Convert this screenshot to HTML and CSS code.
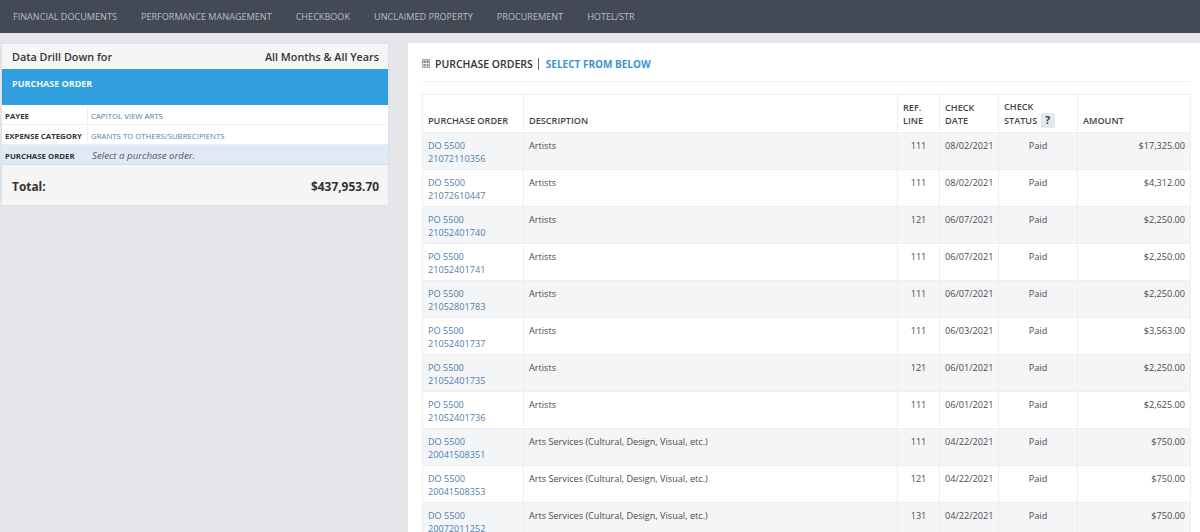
FILE: index.html
```html
<!DOCTYPE html>
<html lang="en">
<head>
<meta charset="utf-8">
<title>Purchase Orders</title>
<link rel="stylesheet" href="styles.css">
</head>
<body>
<nav class="topnav">
  <a>FINANCIAL DOCUMENTS</a>
  <a>PERFORMANCE MANAGEMENT</a>
  <a>CHECKBOOK</a>
  <a>UNCLAIMED PROPERTY</a>
  <a>PROCUREMENT</a>
  <a>HOTEL/STR</a>
</nav>
<main class="layout">
  <aside class="drill">
    <div class="drill-head"><span>Data Drill Down for</span><span>All Months &amp; All Years</span></div>
    <div class="drill-banner">PURCHASE ORDER</div>
    <div class="drill-row"><div class="drill-key">PAYEE</div><div class="drill-val link">CAPITOL VIEW ARTS</div></div>
    <div class="drill-row"><div class="drill-key">EXPENSE CATEGORY</div><div class="drill-val link">GRANTS TO OTHERS/SUBRECIPIENTS</div></div>
    <div class="drill-row current"><div class="drill-key">PURCHASE ORDER</div><div class="drill-val prompt">Select a purchase order.</div></div>
    <div class="drill-total"><span>Total:</span><span>$437,953.70</span></div>
  </aside>
  <section class="panel">
    <header class="panel-head">
      <svg class="panel-icon" width="8" height="9" viewBox="0 0 8 9" aria-hidden="true"><rect x="0.5" y="0.5" width="7" height="8" fill="#f4f4f4" stroke="#aaa"/><rect x="1.5" y="1.5" width="2" height="2.5" fill="#777"/><rect x="4.5" y="1.5" width="2" height="2.5" fill="#777"/><rect x="1.5" y="5" width="2" height="2.5" fill="#888"/><rect x="4.5" y="5" width="2" height="2.5" fill="#888"/></svg>
      <span class="panel-title">PURCHASE ORDERS</span>
      <span class="panel-sep"></span>
      <span class="panel-sub">SELECT FROM BELOW</span>
    </header>
    <table class="orders">
      <colgroup><col class="c1"><col class="c2"><col class="c3"><col class="c4"><col class="c5"><col class="c6"></colgroup>
      <thead>
        <tr><th>PURCHASE ORDER</th><th>DESCRIPTION</th><th>REF.<br>LINE</th><th>CHECK<br>DATE</th><th class="status-h">CHECK<br>STATUS <span class="help">?</span></th><th>AMOUNT</th></tr>
      </thead>
      <tbody>
        <tr><td class="link">DO 5500<br>21072110356</td><td>Artists</td><td class="ctr">111</td><td>08/02/2021</td><td class="ctr">Paid</td><td class="amt">$17,325.00</td></tr>
        <tr><td class="link">DO 5500<br>21072610447</td><td>Artists</td><td class="ctr">111</td><td>08/02/2021</td><td class="ctr">Paid</td><td class="amt">$4,312.00</td></tr>
        <tr><td class="link">PO 5500<br>21052401740</td><td>Artists</td><td class="ctr">121</td><td>06/07/2021</td><td class="ctr">Paid</td><td class="amt">$2,250.00</td></tr>
        <tr><td class="link">PO 5500<br>21052401741</td><td>Artists</td><td class="ctr">111</td><td>06/07/2021</td><td class="ctr">Paid</td><td class="amt">$2,250.00</td></tr>
        <tr><td class="link">PO 5500<br>21052801783</td><td>Artists</td><td class="ctr">111</td><td>06/07/2021</td><td class="ctr">Paid</td><td class="amt">$2,250.00</td></tr>
        <tr><td class="link">PO 5500<br>21052401737</td><td>Artists</td><td class="ctr">111</td><td>06/03/2021</td><td class="ctr">Paid</td><td class="amt">$3,563.00</td></tr>
        <tr><td class="link">PO 5500<br>21052401735</td><td>Artists</td><td class="ctr">121</td><td>06/01/2021</td><td class="ctr">Paid</td><td class="amt">$2,250.00</td></tr>
        <tr><td class="link">PO 5500<br>21052401736</td><td>Artists</td><td class="ctr">111</td><td>06/01/2021</td><td class="ctr">Paid</td><td class="amt">$2,625.00</td></tr>
        <tr><td class="link">DO 5500<br>20041508351</td><td>Arts Services (Cultural, Design, Visual, etc.)</td><td class="ctr">111</td><td>04/22/2021</td><td class="ctr">Paid</td><td class="amt">$750.00</td></tr>
        <tr><td class="link">DO 5500<br>20041508353</td><td>Arts Services (Cultural, Design, Visual, etc.)</td><td class="ctr">121</td><td>04/22/2021</td><td class="ctr">Paid</td><td class="amt">$750.00</td></tr>
        <tr><td class="link">DO 5500<br>20072011252</td><td>Arts Services (Cultural, Design, Visual, etc.)</td><td class="ctr">131</td><td>04/22/2021</td><td class="ctr">Paid</td><td class="amt">$750.00</td></tr>
      </tbody>
    </table>
  </section>
</main>
</body>
</html>
```
FILE: styles.css
```css
* { box-sizing: border-box; }
html, body { height: 100%; overflow: hidden; }
body {
  margin: 0;
  background: #e4e6e9;
  color: #4a4a4a;
  font-family: "Open Sans", "Liberation Sans", sans-serif;
  font-size: 9.15px;
}
.topnav {
  display: flex;
  gap: 24px;
  align-items: center;
  height: 33px;
  padding: 0 13px;
  background: #434a55;
  color: #b9bdc4;
  font-size: 9.1px;
}
.layout {
  display: flex;
  align-items: flex-start;
  gap: 20px;
  padding: 10px 0 0 2px;
}
.drill {
  flex: 0 0 386px;
  margin-top: 1px;
  background: #f5f5f5;
  box-shadow: 0 0 2px rgba(0,0,0,.08);
}
.drill-head {
  display: flex;
  justify-content: space-between;
  align-items: center;
  height: 25px;
  padding: 0 9px 0 10px;
  color: #333;
  font-size: 10.8px;
  font-weight: 600;
}
.drill-banner {
  height: 36px;
  padding: 8px 10px 0;
  background: #2f9fdd;
  color: #f2f8fc;
  font-size: 9px;
  font-weight: 700;
}
.drill-row {
  display: flex;
  height: 20px;
  padding-top: 2px;
  background: #fff;
  border-bottom: 1px solid #edeff2;
  font-size: 7.8px;
}
.drill-key {
  display: flex;
  align-items: center;
  flex: 0 0 86px;
  padding-left: 3px;
  border-right: 1px solid #edeff2;
  color: #333;
  font-weight: 700;
  white-space: nowrap;
}
.drill-val { display: flex; align-items: center; padding-left: 3px; }
.drill-row .link { color: #4f80ad; }
.current { background: #e0eaf7; border-bottom-color: #d8dde4; }
.current .drill-key { border-right: 0; }
.drill-val.prompt { padding-left: 4px; font-size: 9.7px; font-style: italic; color: #555; }
.drill-total {
  display: flex;
  justify-content: space-between;
  align-items: center;
  height: 40px;
  padding: 2px 9px 0 10px;
  color: #333;
  font-size: 11.9px;
  font-weight: 700;
}
.panel {
  flex: 1;
  min-width: 0;
  padding: 0 10px 0 14px;
  background: #fff;
}
.panel-head {
  display: flex;
  align-items: center;
  height: 39px;
  margin-bottom: 12px;
  border-bottom: 1px solid #f0f1f3;
  padding-top: 3px;
}
.panel-icon { margin-right: 5px; }
.panel-title { color: #333; font-size: 10.5px; font-weight: 600; }
.panel-sep { width: 1px; height: 12px; margin: 0 7px 0 5px; background: #666; }
.panel-sub { color: #3b94d0; font-size: 10px; font-weight: 700; }
.orders {
  width: 768px;
  table-layout: fixed;
  border-collapse: collapse;
}
.c1 { width: 101px; }
.c2 { width: 374px; }
.c3 { width: 42px; }
.c4 { width: 59px; }
.c5 { width: 79px; }
.c6 { width: 113px; }
.orders th, .orders td {
  border: 1px solid #eceef1;
  padding: 0 5px;
  line-height: 13px;
  vertical-align: top;
}
.orders th {
  height: 38px;
  padding-bottom: 5px;
  vertical-align: bottom;
  color: #444;
  font-size: 9.15px;
  font-weight: 600;
  text-align: left;
}
.orders th.status-h { padding-bottom: 4px; }
.help {
  display: inline-block;
  width: 14px;
  height: 15px;
  line-height: 15px;
  margin-left: 1px;
  background: #e4e7ec;
  border-radius: 2px;
  color: #333;
  font-size: 10px;
  font-weight: 700;
  text-align: center;
}
.orders td { height: 37px; padding-top: 6px; padding-bottom: 4px; }
.orders tbody tr:nth-child(odd) td { background: #f4f5f7; }
.orders td.link { color: #4f80ad; }
.ctr { text-align: center; }
.amt { text-align: right; }
```
